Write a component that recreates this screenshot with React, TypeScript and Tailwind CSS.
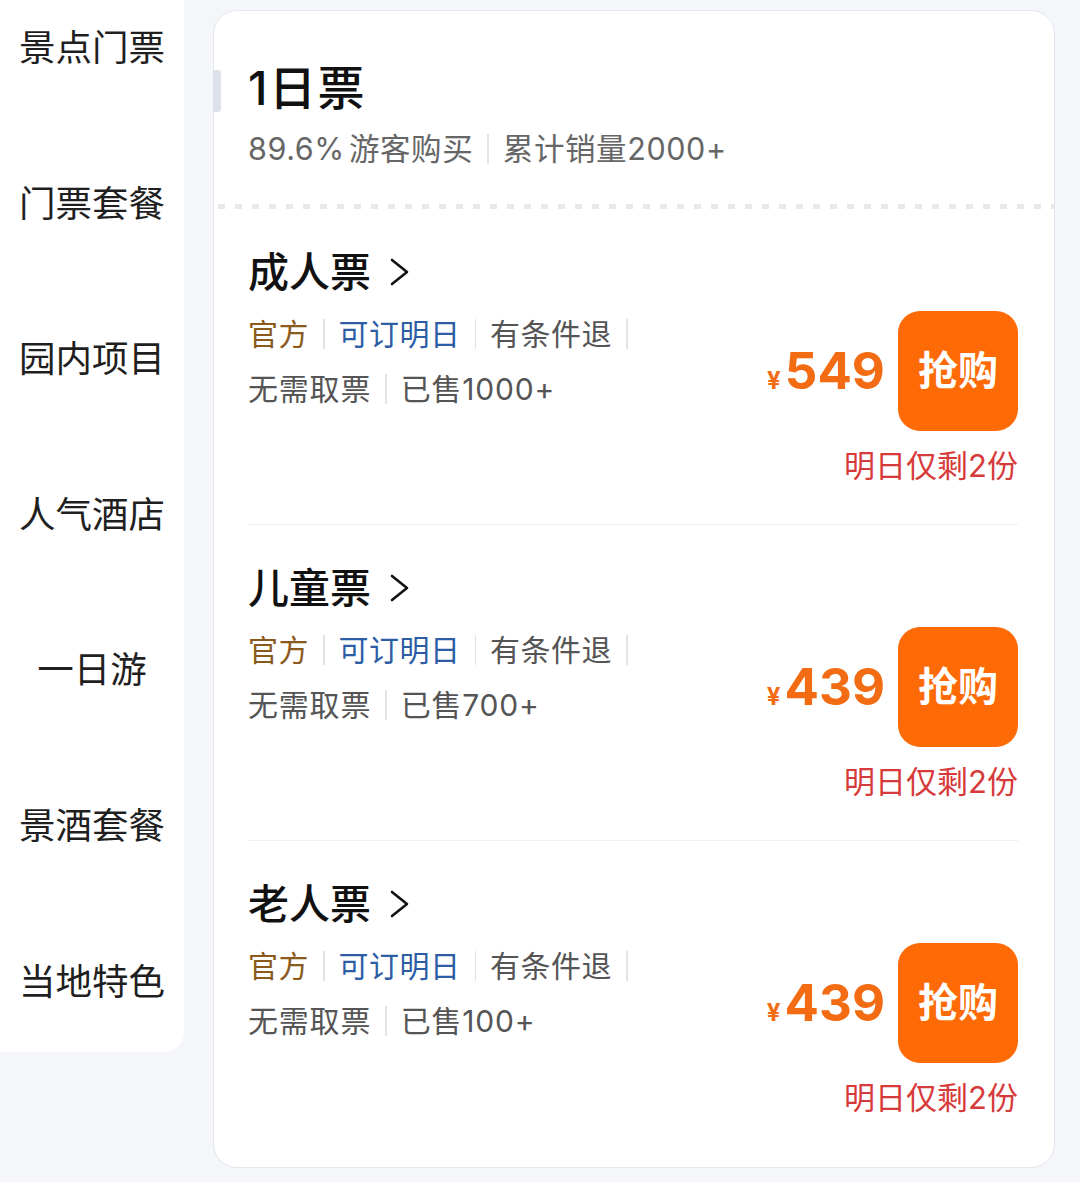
const navItems = ["景点门票", "门票套餐", "园内项目", "人气酒店", "一日游", "景酒套餐", "当地特色"];

const tickets = [
  { name: "成人票", sold: "已售1000+", price: "549" },
  { name: "儿童票", sold: "已售700+", price: "439" },
  { name: "老人票", sold: "已售100+", price: "439" },
];

const Divider = () => <span className="mx-[14px] inline-block h-[30px] w-[1.5px] bg-[#e3e3e3]"></span>;

const App = () => {
  return <div className="flex h-[1182px] w-[1080px] overflow-hidden bg-[#f4f6f9] font-['Inter','Noto_Sans_CJK_SC',sans-serif]">
      {/* Left category nav */}
      <div className="flex w-[184px] shrink-0 flex-col items-center gap-[107.6px] self-start rounded-br-[20px] bg-white pt-[24px] pb-[46px]">
        {navItems.map(item => <div key={item} className="text-[36.5px] leading-[48px] text-[#1f1f1f]">
            {item}
          </div>)}
      </div>

      {/* Ticket card */}
      <div className="relative mt-[10px] ml-[29px] h-[1158px] w-[842px] rounded-[24px] border-[1.5px] border-[#e3e7ed] bg-white">
        <div className="absolute top-[59px] -left-[1.5px] h-[42px] w-[8px] rounded-r-[3px] bg-[#dde2ea]"></div>

        <div className="pt-[48px] pl-[34px]">
          <div className="text-[47px] leading-[58px] font-medium tracking-[1.5px] text-[#111]">1日票</div>
          <div className="mt-[12px] flex items-center text-[30.5px] leading-[40px] tracking-[0.6px] text-[#666]">
            <span>89.6%<span className="ml-[4px]">游客购买</span></span>
            <Divider />
            <span>累计销量2000+</span>
          </div>
        </div>

        <div className="mt-[35px] ml-[4px] h-[5px] bg-[repeating-linear-gradient(90deg,#e9e9e9_0_7px,transparent_7px_17px)]"></div>

        {tickets.map((t, i) => <div key={t.name} className={`ml-[34px] mr-[36px] flex justify-between pt-[38px] pb-[38px] ${i < tickets.length - 1 ? "border-b border-[#f0f0f0]" : ""}`}>
            <div>
              <div className="flex items-center text-[41px] leading-[50px] font-medium text-[#111]">
                {t.name}
                <svg className="ml-[18px]" width="22" height="30" viewBox="0 0 22 30" fill="none">
                  <polyline points="3,3 18,15 3,27" stroke="#111" strokeWidth="2.6" strokeLinecap="round" strokeLinejoin="round" />
                </svg>
              </div>
              <div className="mt-[17px] flex items-center text-[30px] leading-[40px] tracking-[0.5px]">
                <span className="text-[#8a5a1c]">官方</span>
                <Divider />
                <span className="text-[#2c5da5]">可订明日</span>
                <Divider />
                <span className="text-[#555]">有条件退</span>
                <Divider />
              </div>
              <div className="mt-[15px] flex items-center text-[30px] leading-[40px] tracking-[0.8px] text-[#555]">
                <span>无需取票</span>
                <Divider />
                <span>{t.sold}</span>
              </div>
            </div>

            <div className="mt-[64px] flex flex-col items-end">
              <div className="flex items-center">
                <div className="flex items-baseline font-bold text-[#f36b12]">
                  <span className="mr-[4px] text-[24px]">¥</span>
                  <span className="text-[51px] leading-[60px]">{t.price}</span>
                </div>
                <button className="ml-[13px] flex h-[120px] w-[120px] items-center justify-center rounded-[22px] bg-[#fe6a06] text-[40px] font-bold text-white">
                  抢购
                </button>
              </div>
              <div className="mt-[15px] text-[31px] leading-[40px] text-[#d63a3a]">明日仅剩2份</div>
            </div>
          </div>)}
      </div>
    </div>;
};

export default App;
